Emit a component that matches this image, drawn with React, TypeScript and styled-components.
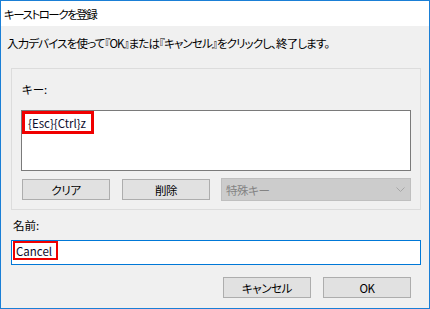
import React from "react";
import styled, { createGlobalStyle } from "styled-components";

const Global = createGlobalStyle`
  html, body { margin: 0; padding: 0; background: #ffffff; }
  * { box-sizing: border-box; }
  body {
    font-family: "Noto Sans CJK JP", "Noto Sans", sans-serif;
    font-size: 11.5px;
    font-feature-settings: "palt" 1;
    color: #000;
  }
`;

const Window = styled.div`
  width: 430px;
  height: 309px;
  border: 1px solid #1a7fd6;
  background: #f0f0f0;
  display: flex;
  flex-direction: column;
`;

const TitleBar = styled.div`
  height: 25px;
  background: #ffffff;
  display: flex;
  align-items: center;
  padding-left: 3px;
  line-height: 16px;
  letter-spacing: -1.5px;
`;

const Body = styled.div`
  flex: 1;
  display: flex;
  flex-direction: column;
  padding: 9px 8px 10px 10px;
`;

const Instruction = styled.div`
  line-height: 16px;
  height: 16px;
  margin-left: -4px;
  white-space: nowrap;
  letter-spacing: -0.85px;
`;

const Group = styled.div`
  margin-top: 17px;
  width: 410px;
  border: 1px solid #dcdcdc;
  padding: 12px 9px 8px 9px;
  display: flex;
  flex-direction: column;
`;

const Label = styled.div<{ $indent?: number }>`
  line-height: 16px;
  height: 16px;
  padding-left: ${(p) => p.$indent ?? 0}px;
`;

const KeyBox = styled.div`
  margin-top: 13px;
  height: 61px;
  width: 390px;
  background: #ffffff;
  border: 1px solid #7a7a7a;
  display: flex;
  align-items: flex-start;
`;

const Mark = styled.span<{ $w: number; $h: number; $b: number; $pl: number }>`
  display: inline-flex;
  align-items: center;
  width: ${(p) => p.$w}px;
  height: ${(p) => p.$h}px;
  border: ${(p) => p.$b}px solid #f00000;
  padding-left: ${(p) => p.$pl}px;
  line-height: 14px;
  font-size: 11.5px;
  white-space: nowrap;
  color: #0c0c2c;
`;

const ButtonRow = styled.div`
  margin-top: 7px;
  height: 23px;
  display: flex;
  align-items: center;
  padding-left: 1px;
`;

const Button = styled.div<{ $gap?: number }>`
  width: 88px;
  height: 21px;
  margin-left: ${(p) => p.$gap ?? 0}px;
  background: #e1e1e1;
  border: 1px solid #adadad;
  display: flex;
  align-items: center;
  justify-content: center;
  line-height: 14px;
  letter-spacing: -0.4px;
`;

const Combo = styled.div`
  margin-left: 11px;
  width: 190px;
  height: 23px;
  background: #cccccc;
  border: 1px solid #bfbfbf;
  display: flex;
  align-items: center;
  justify-content: space-between;
  padding: 0 5px 0 4px;
  color: #838383;
  line-height: 14px;
  letter-spacing: -0.4px;
`;

const NameLabel = styled(Label)`
  margin-top: 7px;
`;

const NameBox = styled.div`
  margin-top: 7px;
  width: 410px;
  height: 25px;
  background: #ffffff;
  border: 1px solid #0078d7;
  padding: 0 0 0 1px;
  display: flex;
  align-items: flex-start;
`;

const Footer = styled.div`
  margin-top: 12px;
  height: 21px;
  display: flex;
  justify-content: flex-end;
  padding-right: 10px;
`;

const Chevron = () => (
  <svg width="9" height="5" viewBox="0 0 9 5">
    <path d="M0.5 0.5 L4.5 4.5 L8.5 0.5" fill="none" stroke="#a6a6a6" strokeWidth="1" />
  </svg>
);

export default function App() {
  return (
    <>
      <Global />
      <Window>
        <TitleBar>キーストロークを登録</TitleBar>
        <Body>
          <Instruction>入力デバイスを使って『OK』または『キャンセル』をクリックし、終了します。</Instruction>
          <Group>
            <Label $indent={1}>キー:</Label>
            <KeyBox>
              <Mark $w={72} $h={23} $b={3} $pl={3}>{"{Esc}{Ctrl}z"}</Mark>
            </KeyBox>
            <ButtonRow>
              <Button>クリア</Button>
              <Button $gap={12}>削除</Button>
              <Combo>
                <span>特殊キー</span>
                <Chevron />
              </Combo>
            </ButtonRow>
          </Group>
          <NameLabel $indent={2}>名前:</NameLabel>
          <NameBox>
            <Mark $w={45} $h={19} $b={2} $pl={1}>Cancel</Mark>
          </NameBox>
          <Footer>
            <Button>キャンセル</Button>
            <Button $gap={12}>OK</Button>
          </Footer>
        </Body>
      </Window>
    </>
  );
}
